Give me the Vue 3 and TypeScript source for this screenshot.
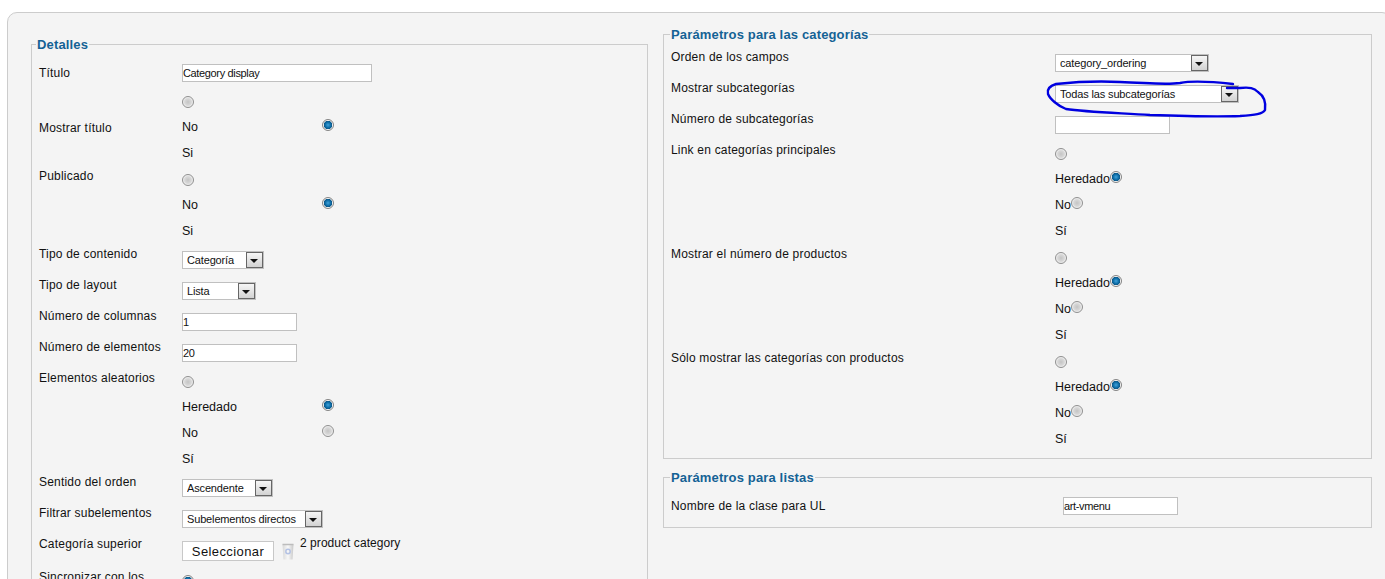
<script setup lang="ts">
type Row = {
  kind: 'text' | 'select' | 'radio' | 'opt' | 'inline' | 'pick'
  label?: string
  value?: string
  w?: number
  ly?: number
  on?: boolean
  group?: string
}

const hr = (label: string, group: string): Row[] => [
  { kind: 'radio', label, group },
  { kind: 'inline', value: 'Heredado', on: true, group },
  { kind: 'inline', value: 'No', group },
  { kind: 'inline', value: 'Sí' }
]

const left: Row[] = [
  { kind: 'text', label: 'Título', value: 'Category display', w: 190, ly: 9 },
  { kind: 'radio', group: 'a' },
  { kind: 'opt', label: 'Mostrar título', value: 'No', on: true, group: 'a', ly: 7 },
  { kind: 'opt', value: 'Si' },
  { kind: 'radio', label: 'Publicado', group: 'b' },
  { kind: 'opt', value: 'No', on: true, group: 'b' },
  { kind: 'opt', value: 'Si' },
  { kind: 'select', label: 'Tipo de contenido', value: 'Categoría', w: 82 },
  { kind: 'select', label: 'Tipo de layout', value: 'Lista', w: 74 },
  { kind: 'text', label: 'Número de columnas', value: '1', w: 115 },
  { kind: 'text', label: 'Número de elementos', value: '20', w: 115 },
  { kind: 'radio', label: 'Elementos aleatorios', group: 'c' },
  { kind: 'opt', value: 'Heredado', on: true, group: 'c' },
  { kind: 'opt', value: 'No', group: 'c' },
  { kind: 'opt', value: 'Sí' },
  { kind: 'select', label: 'Sentido del orden', value: 'Ascendente', w: 91 },
  { kind: 'select', label: 'Filtrar subelementos', value: 'Subelementos directos', w: 141 },
  { kind: 'pick', label: 'Categoría superior', value: '2 product category' },
  { kind: 'radio', label: 'Sincronizar con los', group: 'd', on: true }
]

const right: Row[] = [
  { kind: 'select', label: 'Orden de los campos', value: 'category_ordering', w: 154 },
  { kind: 'select', label: 'Mostrar subcategorías', value: 'Todas las subcategorías', w: 184 },
  { kind: 'text', label: 'Número de subcategorías', value: '', w: 115 },
  ...hr('Link en categorías principales', 'e'),
  ...hr('Mostrar el número de productos', 'f'),
  ...hr('Sólo mostrar las categorías con productos', 'g')
]
</script>

<template>
  <div class="page">
    <main class="panel">
      <section class="col-left">
        <fieldset class="box box-left">
          <legend>Detalles</legend>
          <div
            v-for="(r, i) in left"
            :key="i"
            class="row"
            :class="'k-' + r.kind"
          >
            <label class="lbl" :style="{ paddingTop: (r.ly ?? 3) + 'px' }">{{ r.label }}</label>
            <div class="field">
              <input v-if="r.kind === 'text'" class="txt" type="text" :value="r.value" :style="{ width: r.w + 'px' }" />
              <div v-else-if="r.kind === 'select'" class="sel" :style="{ width: r.w + 'px' }">
                <select><option>{{ r.value }}</option></select>
                <span class="arrow"></span>
              </div>
              <input v-else-if="r.kind === 'radio'" class="rad" type="radio" :name="r.group" :checked="r.on" />
              <template v-else-if="r.kind === 'opt'">
                <span class="opt">{{ r.value }}</span>
                <input v-if="r.group" class="rad" type="radio" :name="r.group" :checked="r.on" />
              </template>
              <div v-else-if="r.kind === 'pick'" class="pick">
                <button type="button">Seleccionar</button>
                <svg class="bin" width="12" height="17" viewBox="0 0 12 17" aria-hidden="true">
                  <defs>
                    <linearGradient id="binfill" x1="0" x2="1" y1="0" y2="0">
                      <stop offset="0" stop-color="#d8d8d8" />
                      <stop offset=".5" stop-color="#f8f8f8" />
                      <stop offset="1" stop-color="#c8c8c8" />
                    </linearGradient>
                  </defs>
                  <path d="M0.5 1.5h11l-1 15h-9z" fill="url(#binfill)" />
                  <path d="M0.5 1.5h11" stroke="#bcbcbc" stroke-width="1.5" />
                  <circle cx="6" cy="8.5" r="2.2" fill="none" stroke="#b4c2e4" stroke-width="1.5" />
                </svg>
                <span class="pick-name">{{ r.value }}</span>
              </div>
            </div>
          </div>
        </fieldset>
      </section>

      <section class="col-right">
        <fieldset class="box">
          <legend>Parámetros para las categorías</legend>
          <div v-for="(r, i) in right" :key="i" class="row wide" :class="'k-' + r.kind">
            <label class="lbl" :style="{ paddingTop: (r.ly ?? 3) + 'px' }">{{ r.label }}</label>
            <div class="field">
              <input v-if="r.kind === 'text'" class="txt" type="text" :value="r.value" :style="{ width: r.w + 'px' }" />
              <div v-else-if="r.kind === 'select'" class="sel" :style="{ width: r.w + 'px' }">
                <select><option>{{ r.value }}</option></select>
                <span class="arrow"></span>
              </div>
              <input v-else-if="r.kind === 'radio'" class="rad" type="radio" :name="r.group" />
              <template v-else>
                <span class="opt">{{ r.value }}</span>
                <input v-if="r.group" class="rad" type="radio" :name="r.group" :checked="r.on" />
              </template>
            </div>
          </div>
        </fieldset>

        <fieldset class="box box-list">
          <legend>Parámetros para listas</legend>
          <div class="row list k-text">
            <label class="lbl lbl-mid">Nombre de la clase para UL</label>
            <div class="field">
              <input class="txt txt-class" type="text" value="art-vmenu" />
            </div>
          </div>
        </fieldset>
      </section>
    </main>

    <svg class="scribble" width="1385" height="579" viewBox="0 0 1385 579" aria-hidden="true">
      <path
        d="M1233 84C1215 82 1195 80 1180 83C1165 85 1150 83 1120 82C1100 81 1075 82 1056 84C1049 86 1047 90 1048 94C1050 99 1058 106 1066 109C1085 112 1120 113 1150 115C1180 116 1215 117 1240 116C1255 115 1263 114 1265 110C1266 103 1264 96 1258 92C1254 88 1250 87 1240 88L1227 88"
        fill="none"
        stroke="#0000e0"
        stroke-width="2.4"
        stroke-linecap="round"
      />
    </svg>
  </div>
</template>

<style scoped>
.page {
  position: relative;
  width: 1385px;
  height: 579px;
  overflow: hidden;
  background: #fff;
  font-family: 'Liberation Sans', Arial, sans-serif;
  font-size: 12px;
  color: #111;
}
.panel {
  box-sizing: border-box;
  width: 1385px;
  height: 640px;
  margin: 12px 0 0 7px;
  padding: 13px 0 0 23px;
  background: #f4f4f4;
  border: 1px solid #ccc;
  border-radius: 10px;
  display: grid;
  grid-template-columns: 617px 709px;
  column-gap: 15px;
  align-items: start;
}
.col-left {
  padding-top: 10px;
}
.box {
  margin: 0;
  padding: 5px 7px 6px;
  border: 1px solid #ccc;
  min-width: 0;
}
.box-list {
  margin-top: 10px;
}
legend {
  margin-left: -1px;
  padding: 2px 1px 0;
  font-size: 13px;
  font-weight: bold;
  line-height: 14px;
  letter-spacing: 0.15px;
  color: #146295;
}
.box-left legend {
  margin-left: -3px;
}
.row {
  display: grid;
  grid-template-columns: 143px 1fr;
  height: 26px;
}
.row.wide {
  grid-template-columns: 384px 1fr;
}
.row.list {
  grid-template-columns: 392px 1fr;
  height: 31px;
}
.k-text,
.k-select {
  height: 31px;
}
.k-pick {
  height: 33px;
}
.lbl {
  line-height: 14px;
  letter-spacing: 0.2px;
  white-space: nowrap;
}
.lbl-mid {
  padding-top: 9px;
}
.field {
  display: flex;
  align-items: flex-start;
  min-width: 0;
}
.txt {
  box-sizing: border-box;
  height: 18px;
  margin: 7px 0 0;
  padding: 0;
  background: #fff;
  border: 1px solid #c0c0c0;
  border-radius: 0;
  outline: none;
  font: 11px 'Liberation Sans', Arial, sans-serif;
  letter-spacing: -0.35px;
  color: #111;
}
.txt-class {
  width: 115px;
}
.sel {
  box-sizing: border-box;
  position: relative;
  height: 18px;
  margin-top: 7px;
  background: #fff;
  border: 1px solid #c0c0c0;
}
.sel select {
  display: block;
  width: 100%;
  height: 16px;
  padding: 0 0 0 4px;
  border: 0;
  outline: none;
  background: transparent;
  appearance: none;
  font: 11px 'Liberation Sans', Arial, sans-serif;
  letter-spacing: -0.15px;
  color: #111;
}
.arrow {
  position: absolute;
  right: 0;
  top: 0;
  box-sizing: border-box;
  width: 17px;
  height: 16px;
  background: linear-gradient(#f6f6f6, #d2d2d2);
  border: 1px solid #666;
  pointer-events: none;
}
.arrow::after {
  content: '';
  position: absolute;
  left: 3px;
  top: 6px;
  border-left: 4.5px solid transparent;
  border-right: 4.5px solid transparent;
  border-top: 4px solid #111;
}
.rad {
  appearance: none;
  box-sizing: border-box;
  flex: none;
  width: 12px;
  height: 12px;
  margin: 8px 0 0;
  border: 1px solid #8f8f8f;
  border-radius: 50%;
  background: radial-gradient(circle at 50% 50%, #c4c4c4 0, #d8d8d8 48%, #f4f4f4 72%, #bebebe 100%);
}
.rad:checked {
  background: radial-gradient(circle at 50% 50%, #3fa2da 0, #0e6ea8 38%, #0a5788 56%, #f4f4f4 64%, #d0d0d0 100%);
  border-color: #848484;
}
.opt {
  margin-top: 6px;
  font-size: 12.5px;
  line-height: 14px;
  white-space: nowrap;
}
.k-opt .rad,
.k-inline .rad {
  margin-top: 5px;
}
.k-opt .opt {
  width: 140px;
  flex: none;
}
.pick {
  display: flex;
  align-items: flex-start;
}
.pick button {
  box-sizing: border-box;
  width: 92px;
  height: 20px;
  margin-top: 7px;
  padding: 0;
  background: #fff;
  border: 1px solid #c8c8c8;
  border-radius: 0;
  font: 13px 'Liberation Sans', Arial, sans-serif;
  letter-spacing: 0.4px;
  color: #111;
}
.bin {
  margin: 9px 0 0 8px;
}
.pick-name {
  margin: 2px 0 0 6px;
  line-height: 14px;
  letter-spacing: 0.05px;
  white-space: nowrap;
}
.scribble {
  position: absolute;
  left: 0;
  top: 0;
  pointer-events: none;
}
</style>

<style>
html,
body {
  margin: 0;
  overflow: hidden;
  background: #fff;
}
</style>
